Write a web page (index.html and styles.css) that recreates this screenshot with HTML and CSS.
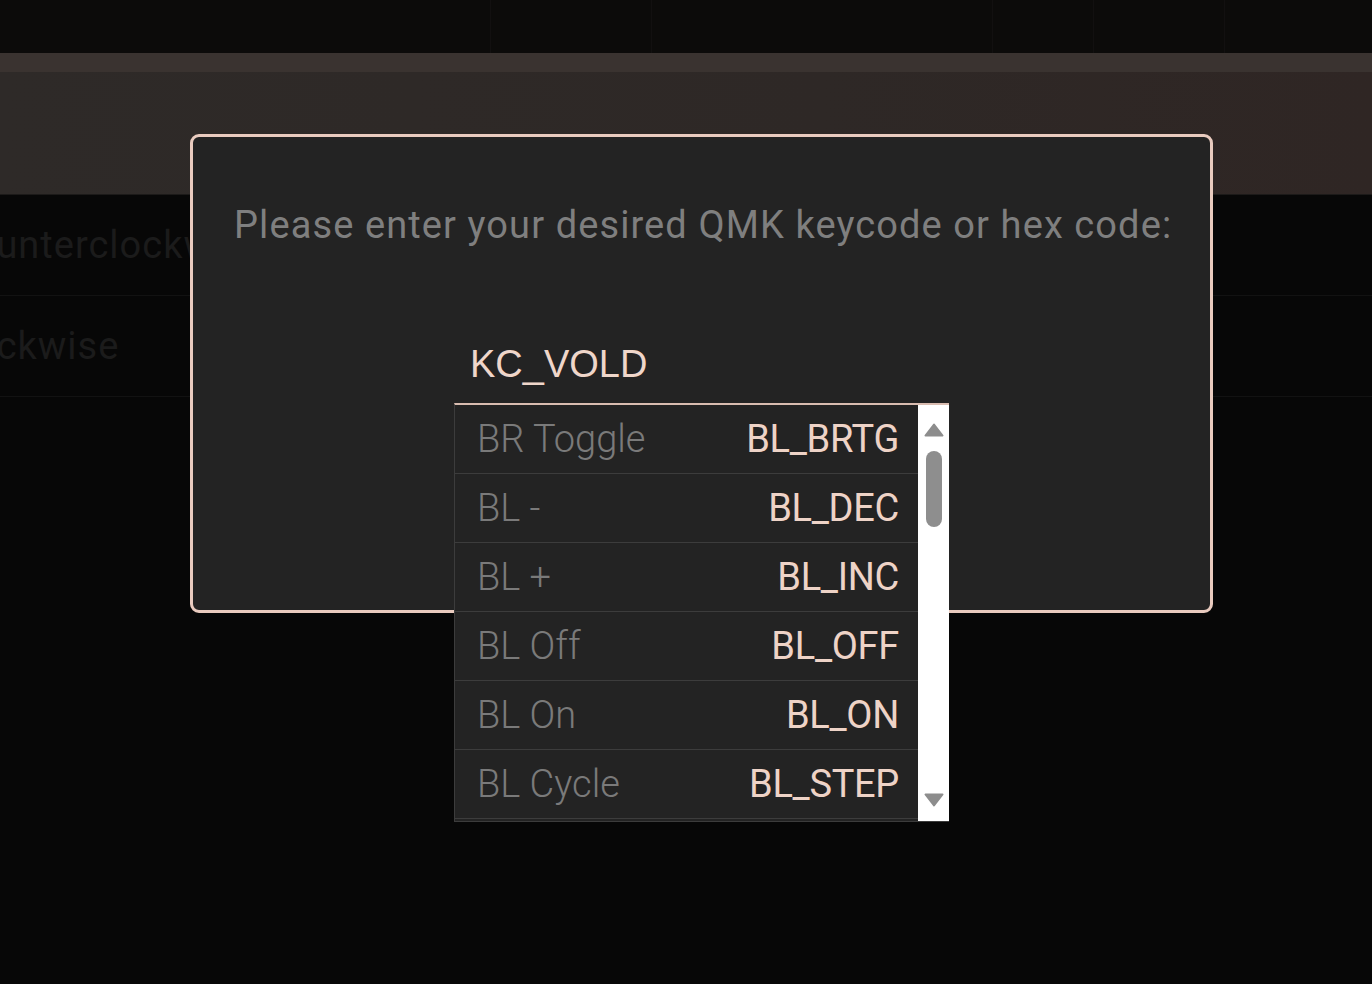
FILE: index.html
```html
<!DOCTYPE html>
<html lang="en">
<head>
<meta charset="utf-8">
<title>Keycode entry</title>
<link rel="stylesheet" href="styles.css">
</head>
<body>
<div class="page">
  <div class="topbar">
    <span class="tb-line l1"></span><span class="tb-line l2"></span><span class="tb-line l3"></span><span class="tb-line l4"></span><span class="tb-line l5"></span>
  </div>
  <div class="band"></div>
  <div class="header"></div>
  <div class="rows">
    <div class="row"><span class="row-text ccw">Counterclockwise</span></div>
    <div class="row"><span class="row-text cw">Clockwise</span></div>
  </div>
</div>

<div class="modal">
  <div class="prompt">Please enter your desired QMK keycode or hex code:</div>
  <div class="autocomplete">
    <div class="input">KC_VOLD</div>
    <div class="dropdown">
      <div class="list">
        <div class="item"><span class="label">BR Toggle</span><span class="code">BL_BRTG</span></div>
        <div class="item"><span class="label">BL -</span><span class="code">BL_DEC</span></div>
        <div class="item"><span class="label">BL +</span><span class="code">BL_INC</span></div>
        <div class="item"><span class="label">BL Off</span><span class="code">BL_OFF</span></div>
        <div class="item"><span class="label">BL On</span><span class="code">BL_ON</span></div>
        <div class="item"><span class="label">BL Cycle</span><span class="code">BL_STEP</span></div>
        <div class="item item-next"></div>
      </div>
      <div class="scrollbar">
        <svg class="arrow" width="20" height="14" viewBox="0 0 20 14"><path d="M10 1.5 L18.5 12.5 L1.5 12.5 Z" fill="#8d8d8d" stroke="#8d8d8d" stroke-width="2" stroke-linejoin="round"/></svg>
        <div class="thumb"></div>
        <div class="track"></div>
        <svg class="arrow" width="20" height="14" viewBox="0 0 20 14"><path d="M1.5 1.5 L18.5 1.5 L10 12.5 Z" fill="#8d8d8d" stroke="#8d8d8d" stroke-width="2" stroke-linejoin="round"/></svg>
      </div>
    </div>
  </div>
</div>
</body>
</html>
```

FILE: styles.css
```css
html, body {
  margin: 0;
  padding: 0;
  background: #070707;
  width: 1372px;
  height: 984px;
  overflow: hidden;
}

body {
  font-family: Roboto, "Liberation Sans", sans-serif;
}

.page {
  display: flex;
  flex-direction: column;
}

.topbar {
  height: 53px;
  background: #0c0b0a;
  display: flex;
}

.tb-line {
  width: 1px;
  height: 53px;
  background: #121010;
}
.l1 { margin-left: 490px; }
.l2 { margin-left: 160px; }
.l3 { margin-left: 340px; }
.l4 { margin-left: 100px; }
.l5 { margin-left: 130px; }

.band {
  height: 19px;
  background: #3a3330;
}

.header {
  height: 122px;
  background: linear-gradient(90deg, #2e2a28 0%, #2e2826 60%, #2f2624 100%);
  border-bottom: 1px solid #1c1a19;
}

.rows {
  display: flex;
  flex-direction: column;
}

.row {
  height: 100px;
  border-bottom: 1px solid #121212;
  display: flex;
  align-items: center;
  overflow: hidden;
  white-space: nowrap;
}

.row-text {
  font-size: 38px;
  letter-spacing: 1px;
  color: #1b1b1b;
}

.ccw { margin-left: -52px; }
.cw { margin-left: -62px; }

/* Modal overlay */
.modal {
  position: absolute;
  left: 190px;
  top: 134px;
  width: 1023px;
  height: 479px;
  box-sizing: border-box;
  background: #232323;
  border: 3px solid #e9cbbf;
  border-radius: 9px;
  padding: 66px 0 0 41px;
  display: flex;
  flex-direction: column;
}

.prompt {
  font-size: 38px;
  letter-spacing: 1.1px;
  line-height: 44px;
  color: #7f7f7f;
  white-space: nowrap;
}

.autocomplete {
  position: relative;
  width: 495px;
  margin: 93px 0 0 220px;
}

.input {
  height: 63px;
  box-sizing: border-box;
  padding-left: 16px;
  font-family: "Liberation Sans", Arial, sans-serif;
  font-size: 38px;
  line-height: 48px;
  color: #efd6ca;
}

.dropdown {
  position: absolute;
  left: 0;
  top: 63px;
  width: 495px;
  height: 419px;
  box-sizing: border-box;
  border-top: 2px solid #d9bcb0;
  border-left: 1px solid #3c3c3c;
  border-bottom: 1px solid #3c3c3c;
  display: flex;
  overflow: hidden;
  background: #232323;
}

.list {
  width: 463px;
  display: flex;
  flex-direction: column;
}

.item {
  flex: none;
  height: 68px;
  border-bottom: 1px solid #3c3c3c;
  display: flex;
  align-items: center;
  justify-content: space-between;
  padding: 0 19px 0 22px;
  font-size: 38px;
  font-weight: 300;
}

.label {
  color: #7a7a7a;
}

.code {
  color: #eed3c7;
  font-weight: 400;
  letter-spacing: -0.3px;
}

.scrollbar {
  width: 31px;
  background: #ffffff;
  display: flex;
  flex-direction: column;
  align-items: center;
  padding: 18px 0 14px;
  box-sizing: border-box;
}

.arrow {
  display: block;
  flex: none;
}

.thumb {
  width: 16px;
  height: 76px;
  border-radius: 8px;
  background: #8e8e8e;
  margin-top: 14px;
  flex: none;
}

.track {
  flex: 1;
}
```
